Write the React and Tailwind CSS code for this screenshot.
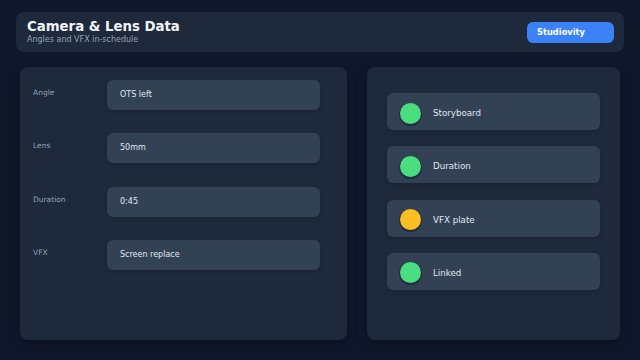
import React from 'react';

const fields = [
  { label: 'Angle', value: 'OTS left' },
  { label: 'Lens', value: '50mm' },
  { label: 'Duration', value: '0:45' },
  { label: 'VFX', value: 'Screen replace' }
];

const checks = [
  { label: 'Storyboard', tone: 'bg-[#4ade80]' },
  { label: 'Duration', tone: 'bg-[#4ade80]' },
  { label: 'VFX plate', tone: 'bg-[#fbbf24]' },
  { label: 'Linked', tone: 'bg-[#4ade80]' }
];

const App = () => {
  return (
    <div
      className="h-[360px] w-[640px] overflow-hidden bg-[#0f172a] px-4 pt-3"
      style={{ fontFamily: '"DejaVu Sans", sans-serif' }}
    >
      <header className="flex h-10 items-center justify-between rounded-lg bg-[#1e293b] pl-[11px] pr-[10px]">
        <div className="leading-none">
          <h1 className="text-[13.3px] font-bold text-[#f1f5f9]">Camera &amp; Lens Data</h1>
          <p className="mt-[3px] text-[8px] text-[#94a3b8]">Angles and VFX in-schedule</p>
        </div>
        <button
          type="button"
          className="h-[21px] w-[87px] rounded-md bg-[#3b82f6] pl-[10px] text-left text-[8.3px] font-bold text-white"
        >
          Studiovity
        </button>
      </header>

      <main className="mt-[15px] flex gap-5 px-1">
        <section className="h-[273px] w-[327px] rounded-lg bg-[#1e293b] px-[13px] pt-[13px] shadow-[0_4px_12px_rgba(0,0,0,0.25)]">
          <div className="flex flex-col gap-[23.3px]">
            {fields.map((field) => (
              <div key={field.label} className="flex items-start">
                <span className="w-[74px] pt-[7px] text-[7.5px] text-[#94a3b8]">{field.label}</span>
                <div className="flex h-[30px] w-[213px] items-center rounded-md bg-[#334155] px-[13px] text-[8px] text-[#e2e8f0] shadow-[0_2px_4px_rgba(0,0,0,0.15)]">
                  {field.value}
                </div>
              </div>
            ))}
          </div>
        </section>

        <section className="h-[273px] w-[253px] rounded-lg bg-[#1e293b] px-5 pt-[26px] shadow-[0_4px_12px_rgba(0,0,0,0.25)]">
          <div className="flex flex-col gap-[16.3px]">
            {checks.map((item) => (
              <div
                key={item.label}
                className="flex h-[37px] items-center gap-3 rounded-md bg-[#334155] pl-[13px] text-[8.7px] text-[#e2e8f0] shadow-[0_2px_4px_rgba(0,0,0,0.15)]"
              >
                <span className={`mt-[3px] h-[21px] w-[21px] rounded-full ${item.tone} shadow-[0_1px_0_1px_rgba(15,23,42,0.45)]`}></span>
                <span className="mt-[4px]">{item.label}</span>
              </div>
            ))}
          </div>
        </section>
      </main>
    </div>
  );
};

export default App;
